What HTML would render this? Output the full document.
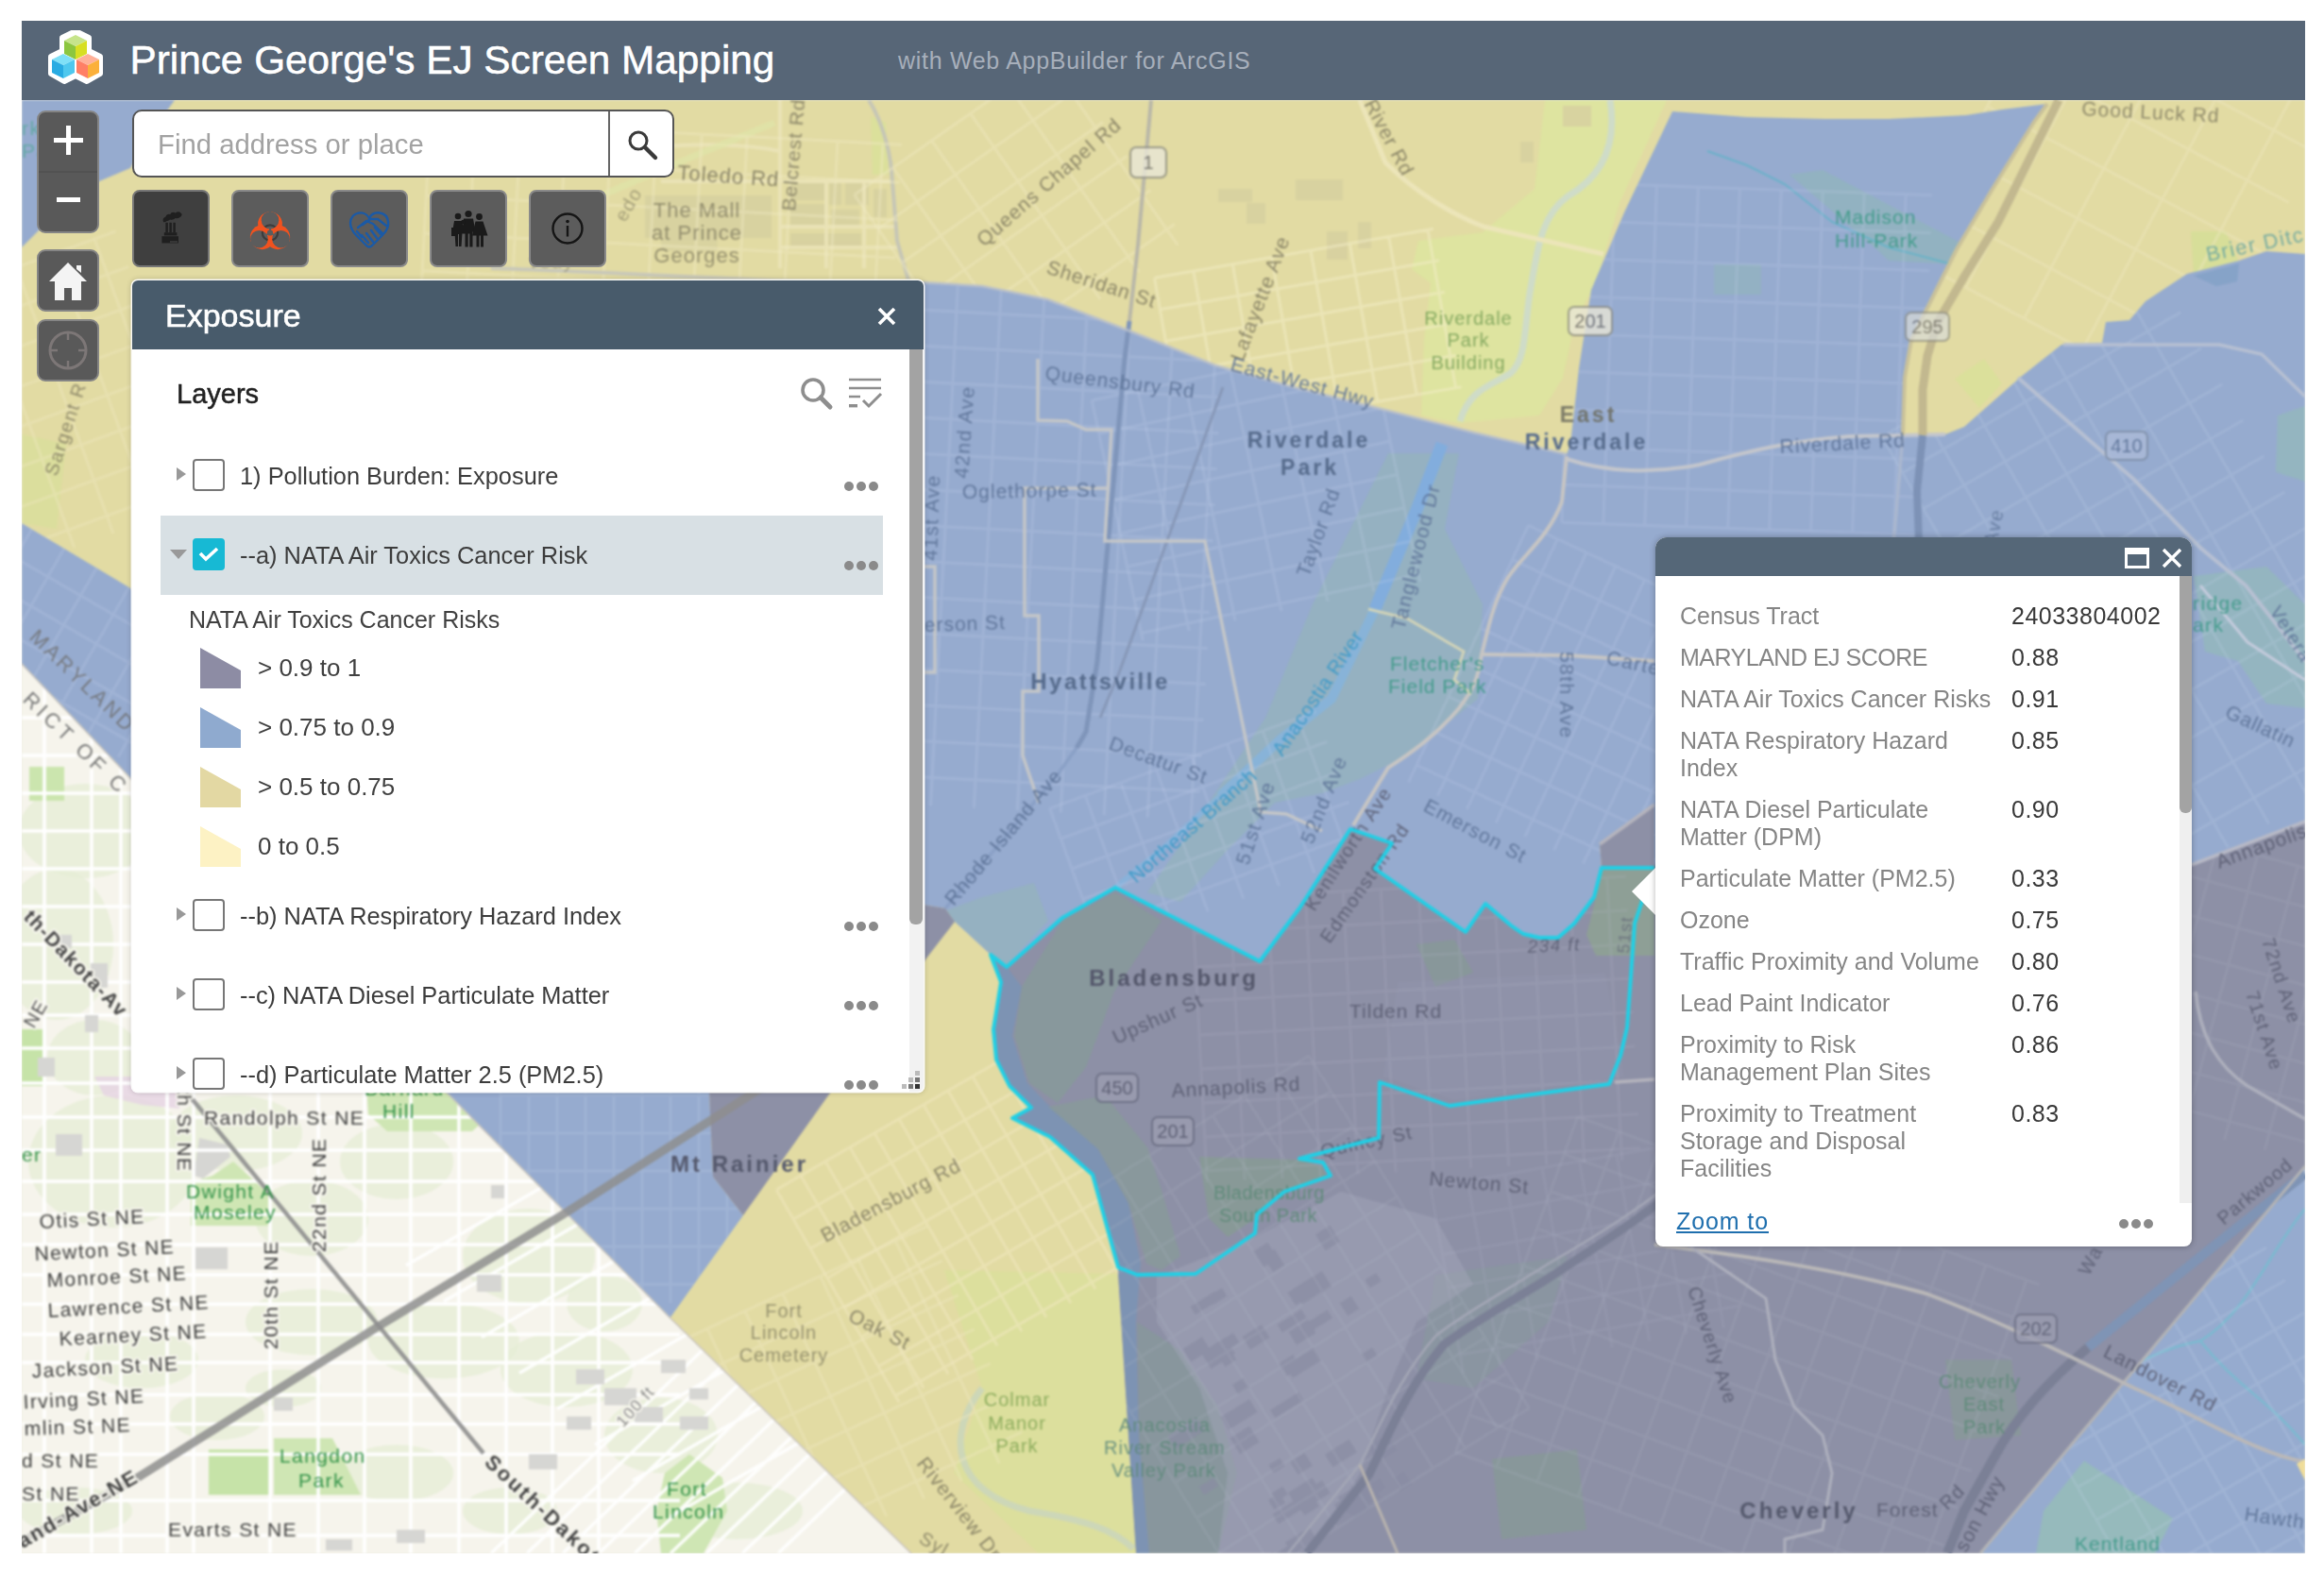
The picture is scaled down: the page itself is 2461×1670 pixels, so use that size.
<!DOCTYPE html>
<html>
<head>
<meta charset="utf-8">
<title>Prince George's EJ Screen Mapping</title>
<style>
html,body{margin:0;padding:0;background:#fff;}
body{width:2461px;height:1670px;position:relative;overflow:hidden;font-family:"Liberation Sans",sans-serif;}
#app{position:absolute;left:23px;top:22px;width:2418px;height:1623px;overflow:hidden;background:#f1f0e6;}
#mapsvg{position:absolute;left:-23px;top:-22px;width:2461px;height:1670px;filter:blur(1px);}
#ui{position:absolute;left:0;top:0;width:2418px;height:1623px;filter:blur(0.6px);}
#header{position:absolute;left:0;top:0;width:2418px;height:84px;background:#576677;}
#title{position:absolute;left:114.5px;top:18px;font-size:42.3px;line-height:48px;color:#fff;white-space:nowrap;-webkit-text-stroke:0.5px #fff;}
#subtitle{position:absolute;left:928px;top:27px;font-size:25px;line-height:30px;color:#a7afbb;white-space:nowrap;letter-spacing:0.7px;}
.mbtn{position:absolute;background:#595959;border:2px solid #858585;border-radius:9px;box-sizing:border-box;}
.wbtn{position:absolute;width:82px;height:82px;background:#5c5c5c;border:2px solid #8a8a8a;border-radius:8px;box-sizing:border-box;top:179px;}
#search{position:absolute;left:117px;top:94px;width:574px;height:72px;background:#fff;border:2px solid #555;border-radius:10px;box-sizing:border-box;}
#search .ph{position:absolute;left:25px;top:17px;font-size:29.3px;line-height:36px;color:#a2a2a2;white-space:nowrap;}
#search .sep{position:absolute;left:502px;top:0;width:2px;height:68px;background:#666;}
#panel{position:absolute;left:117px;top:275px;width:838px;height:859px;background:#fff;border-radius:6px;overflow:hidden;box-shadow:0 0 0 1.5px rgba(255,255,255,0.9),0 0 6px rgba(0,0,0,0.3);}
#panel .hd{position:absolute;left:0;top:0;width:838px;height:73px;background:#485b6b;}
#panel .hd .t{position:absolute;left:35px;top:17px;font-size:34px;line-height:40px;color:#fff;-webkit-text-stroke:0.6px #fff;}
#panel .layers{position:absolute;left:47px;top:103px;font-size:29px;line-height:34px;color:#222;-webkit-text-stroke:0.5px #222;}
.row{position:absolute;left:0;width:838px;height:84px;}
.row .txt{position:absolute;left:114px;top:27px;font-size:25.4px;line-height:30px;color:#3c3c3c;white-space:nowrap;}
.row .cb{position:absolute;left:64px;top:24px;width:34px;height:34px;box-sizing:border-box;border:2px solid #777;border-radius:4px;background:#fff;}
.row .arr{position:absolute;left:47px;top:33px;width:0;height:0;border-left:10px solid #999;border-top:7px solid transparent;border-bottom:7px solid transparent;}
.dots{position:absolute;width:36px;height:10px;}
.dots i{position:absolute;top:0;width:10px;height:10px;border-radius:5px;background:#8a8a8a;}
.dots i:nth-child(1){left:0}.dots i:nth-child(2){left:13px}.dots i:nth-child(3){left:26px}
.leg{position:absolute;left:72px;width:43px;height:43px;}
.legt{position:absolute;left:133px;font-size:26px;line-height:30px;color:#404040;white-space:nowrap;}
#popup{position:absolute;left:1730px;top:547px;width:568px;height:751px;background:#fff;border-radius:12px 12px 8px 8px;overflow:hidden;box-shadow:0 0 6px rgba(0,0,0,0.3);}
#popup .hd{position:absolute;left:0;top:0;width:568px;height:41px;background:#556778;}
.pl{position:absolute;left:26px;font-size:25px;line-height:29px;color:#858585;white-space:nowrap;}
.pv{position:absolute;left:377px;font-size:25px;line-height:29px;color:#383838;white-space:nowrap;letter-spacing:0.5px;}
</style>
</head>
<body>
<div id="app">
<svg id="mapsvg" viewBox="0 0 2461 1670">
<defs>
<clipPath id="cDC"><polygon points="23,702 140,825 473,1156 710,1395 966,1645 23,1645"/></clipPath>
<clipPath id="cMD"><polygon points="23,106 2441,106 2441,1645 966,1645 710,1395 473,1156 140,825 23,702"/></clipPath>
<clipPath id="cYel"><path clip-rule="evenodd" d="M23,106 L2441,106 L2441,1645 L966,1645 L710,1395 L473,1156 L140,825 L23,702Z"/></clipPath>
<clipPath id="cB2"><polygon points="977,299 1040,303 1109,317 1200,352 1287,387 1370,410 1462,433 1560,458 1659,481 1663,470 1672,390 1685,307 1720,225 1771,118 1850,124 1933,126 2000,126 2082,122 2120,116 2168,110 2154,129 2110,200 2072,264 2045,318 2024,360 2017,400 2015,461 2060,460 2080,452 2140,399 2183,365 2226,363 2230,341 2255,339 2272,319 2316,290 2371,276 2400,266 2441,269 2441,870 2320,916 1752,916 1752,852 1694,894 1696,919 1688,950 1667,978 1650,993 1630,993 1613,989 1600,980 1573,957 1552,987 1456,920 1474,893 1430,878 1376,962 1334,1018 1181,940 1125,972 1066,1024 1049,1011 1011,976 1001,962 977,958"/></clipPath>
<clipPath id="cB1"><polygon points="23,554 140,624 300,720 751,1150 751,1156 755,1246 787,1287 710,1395 473,1156 140,825 23,702"/></clipPath>
<clipPath id="cP1"><polygon points="1049,1011 1066,1024 1125,972 1181,940 1334,1018 1376,962 1430,878 1474,893 1456,920 1552,987 1573,957 1600,980 1613,989 1630,993 1650,993 1667,978 1688,950 1696,919 1694,894 1752,852 1752,916 2320,916 2441,870 2441,1235 2097,1645 1203,1645 1184,1349 1184,1342 1157,1244 1112,1204 1072,1184 1092,1173 1069,1150 1055,1122 1052,1090 1060,1040"/></clipPath>
<clipPath id="cB3"><polygon points="2441,1235 2441,1645 2097,1645"/></clipPath>
</defs>
<rect x="23" y="106" width="2418" height="1539" fill="#f6f4ec"/>
<g clip-path="url(#cDC)">
<ellipse cx="90" cy="880" rx="70" ry="50" fill="#e5eed6" opacity="0.75"/>
<ellipse cx="60" cy="1000" rx="60" ry="80" fill="#e5eed6" opacity="0.75"/>
<ellipse cx="120" cy="1230" rx="90" ry="70" fill="#e5eed6" opacity="0.75"/>
<ellipse cx="250" cy="1200" rx="70" ry="40" fill="#e5eed6" opacity="0.75"/>
<ellipse cx="330" cy="1290" rx="60" ry="40" fill="#e5eed6" opacity="0.75"/>
<ellipse cx="420" cy="1230" rx="60" ry="40" fill="#e5eed6" opacity="0.75"/>
<ellipse cx="560" cy="1330" rx="70" ry="50" fill="#e5eed6" opacity="0.75"/>
<ellipse cx="470" cy="1420" rx="80" ry="40" fill="#e5eed6" opacity="0.75"/>
<ellipse cx="600" cy="1450" rx="70" ry="40" fill="#e5eed6" opacity="0.75"/>
<ellipse cx="330" cy="1400" rx="70" ry="35" fill="#e5eed6" opacity="0.75"/>
<ellipse cx="150" cy="1440" rx="60" ry="30" fill="#e5eed6" opacity="0.75"/>
<ellipse cx="230" cy="1500" rx="50" ry="25" fill="#e5eed6" opacity="0.75"/>
<ellipse cx="420" cy="1560" rx="60" ry="30" fill="#e5eed6" opacity="0.75"/>
<ellipse cx="700" cy="1520" rx="60" ry="40" fill="#e5eed6" opacity="0.75"/>
<ellipse cx="780" cy="1600" rx="70" ry="30" fill="#e5eed6" opacity="0.75"/>
<ellipse cx="540" cy="1600" rx="50" ry="25" fill="#e5eed6" opacity="0.75"/>
<ellipse cx="80" cy="1600" rx="60" ry="25" fill="#e5eed6" opacity="0.75"/>
<ellipse cx="640" cy="1380" rx="40" ry="30" fill="#e5eed6" opacity="0.75"/>
<ellipse cx="100" cy="1120" rx="50" ry="40" fill="#e5eed6" opacity="0.75"/>
<ellipse cx="300" cy="1470" rx="40" ry="20" fill="#e5eed6" opacity="0.75"/>
<polygon points="100,1140 190,1140 190,1174 150,1170 110,1160" fill="#e6d3e3" opacity="0.8"/>
<polygon points="202,1252 225,1245 247,1230 284,1264 284,1298 202,1298" fill="#cfe6b4"/><polygon points="211,1205 240,1212 244,1225 215,1248 205,1245" fill="#d6d6d3"/>
<rect x="221" y="1535" width="65" height="48" fill="#c6e3a8"/>
<polygon points="290,1523 352,1523 382,1583 290,1583" fill="#cfe6b4"/>
<polygon points="388,1150 520,1150 520,1180 500,1198 410,1198 390,1180" fill="#cfe6b4"/>
<polygon points="704,1560 730,1540 765,1565 770,1600 745,1645 700,1645 695,1600" fill="#cfe6b4"/>
<polygon points="23,1090 45,1090 45,1150 23,1150" fill="#c6e3a8"/>
<rect x="31" y="812" width="37" height="36" fill="#cbe5ae"/>
<polygon points="630,1300 660,1290 700,1340 680,1360" fill="#d6e9bf"/>
<path d="M47 700V1645 M97 700V1645 M128 700V1645 M177 700V1645 M205 700V1645 M286 700V1645 M337 700V1645 M386 700V1645 M435 700V1645 M486 700V1645 M536 700V1645 M585 700V1645 M634 700V1645 M23 1183H720 M23 1218H720 M23 1251H720 M23 1286H720 M23 1318H720 M23 1350H720 M23 1381H720 M23 1413H720 M23 1443H720 M23 1477H720 M23 1508H720 M23 1540H720 M23 1589H720 M23 1626H720 M23 760H300 M23 800H300 M23 840H300 M23 880H300 M23 920H300 M23 960H300 M23 1000H300 M23 1040H300 M23 1075H300 M23 1110H300 M23 1147H300" stroke="#ffffff" stroke-width="3.5" fill="none"/>
<path d="M520 1645L780 1395 M558 1645L818 1395 M596 1645L856 1395 M634 1645L894 1395 M672 1645L932 1395 M710 1645L970 1395 M748 1645L1008 1395 M786 1645L1046 1395 M824 1645L1084 1395 M430 1340L630 1225 M470 1378L670 1263 M510 1416L710 1301 M550 1454L750 1339 M590 1492L790 1377 M630 1530L830 1415 M670 1568L870 1453 M710 1606L910 1491" stroke="#ffffff" stroke-width="3.5" fill="none" opacity="0.9"/>
<rect x="59" y="1201" width="28" height="23" fill="#d6d6d3"/>
<rect x="207" y="1321" width="34" height="23" fill="#d6d6d3"/>
<rect x="520" y="1255" width="14" height="14" fill="#d6d6d3"/>
<rect x="505" y="1350" width="26" height="18" fill="#d6d6d3"/>
<rect x="610" y="1450" width="30" height="16" fill="#d6d6d3"/>
<rect x="640" y="1470" width="34" height="18" fill="#d6d6d3"/>
<rect x="672" y="1490" width="30" height="16" fill="#d6d6d3"/>
<rect x="600" y="1500" width="26" height="14" fill="#d6d6d3"/>
<rect x="560" y="1540" width="30" height="16" fill="#d6d6d3"/>
<rect x="720" y="1500" width="30" height="14" fill="#d6d6d3"/>
<rect x="290" y="1480" width="20" height="14" fill="#d6d6d3"/>
<rect x="420" y="1620" width="30" height="14" fill="#d6d6d3"/>
<rect x="345" y="1630" width="28" height="12" fill="#d6d6d3"/>
<rect x="40" y="1120" width="18" height="20" fill="#d6d6d3"/>
<rect x="60" y="990" width="16" height="14" fill="#d6d6d3"/>
<rect x="96" y="1020" width="18" height="26" fill="#d6d6d3"/>
<rect x="90" y="1075" width="14" height="18" fill="#d6d6d3"/>
<rect x="700" y="1440" width="26" height="14" fill="#d6d6d3"/>
<rect x="730" y="1470" width="20" height="12" fill="#d6d6d3"/>
</g>
<path d="M23 702L140 825L473 1156L710 1395L966 1645" stroke="#c9c4bf" stroke-width="3" fill="none"/>
<polygon fill="#e2dba3" points="23,106 2441,106 2441,1645 966,1645 710,1395 473,1156 140,825 23,702"/>
<g clip-path="url(#cMD)">
<path d="M1636 106 L1765 106 L1715 215 L1690 300 L1668 340 L1655 400 L1630 440 L1545 448 L1505 440 L1508 360 L1515 300 L1495 285 L1502 255 L1570 246 L1625 200 Z" fill="#dde5a0" opacity="0.85"/>
<path d="M1705 106 C1712 150 1700 185 1660 208 C1630 230 1628 268 1620 310 C1614 350 1616 380 1600 395 C1580 408 1556 412 1546 446" stroke="#cfdcc8" stroke-width="7" fill="none"/>
<path d="M1000 1345 L1183 1349 L1203 1645 L1100 1645 L1010 1560 L1040 1470 Z" fill="#dcdf9c" opacity="0.9"/>
<path d="M1040 1470 C1000 1520 1010 1580 1090 1600 C1150 1610 1180 1620 1200 1640" stroke="#cdd7b8" stroke-width="7" fill="none"/>
<path d="M23 460 L70 470 L60 560 L23 554Z" fill="#d9e09a" opacity="0.7"/>
<path d="M2320 245 L2357 245 L2371 278 L2323 292Z" fill="#d6de98" opacity="0.9"/>
<path d="M2070 401 L2101 380 L2120 406 L2096 432Z" fill="#d9e09a" opacity="0.85"/>
<g fill="#d8d1a0" opacity="0.9">
<rect x="683" y="207" width="134" height="45"/>
<rect x="700" y="252" width="60" height="14"/>
<rect x="837" y="194" width="36" height="18"/>
<rect x="878" y="194" width="13" height="23"/>
<rect x="895" y="194" width="25" height="23"/>
<rect x="837" y="216" width="38" height="26"/>
<rect x="837" y="247" width="38" height="17"/>
<rect x="877" y="247" width="35" height="17"/>
<rect x="880" y="222" width="30" height="20"/>
<rect x="925" y="200" width="14" height="30"/>
<rect x="560" y="150" width="40" height="20"/>
<rect x="610" y="140" width="30" height="26"/>
<rect x="940" y="330" width="20" height="14"/>
<rect x="1290" y="200" width="36" height="14"/>
<rect x="1320" y="215" width="20" height="22"/>
<rect x="1405" y="245" width="22" height="30"/>
<rect x="1438" y="235" width="14" height="28"/>
<rect x="1372" y="190" width="50" height="22"/>
<rect x="1655" y="112" width="30" height="22"/>
<rect x="1610" y="150" width="14" height="22"/>
</g>
<g fill="none" stroke="#ebe4b8" stroke-width="4" opacity="0.9">
<path d="M826 106 V284"/>
<path d="M700 192 H944"/>
<path d="M826 240 H950 M826 262 H952 M875 192 V284 M915 192 V284"/>
<path d="M660 160 C720 150 790 152 826 160"/>
</g>
<path d="M922 123 L938 130 L941 185 L924 185Z" fill="#d9e09a" opacity="0.85"/>
<path d="M920 106 C935 130 942 160 944 180 L950 255 L962 297" stroke="#c6c6b6" stroke-width="4" fill="none"/>
<path d="M560 240 L700 180 L820 130" stroke="#dfe6a8" stroke-width="7" fill="none" opacity="0.7"/>
<path d="M1440 106 L1467 172 C1500 205 1540 228 1571 240 L1698 269" stroke="#ece5b9" stroke-width="5" fill="none"/>
</g>
<g clip-path="url(#cMD)"><path transform="translate(1385 352) rotate(-10)" d="M-150 -85V85 M-108 -85V85 M-66 -85V85 M-24 -85V85 M18 -85V85 M60 -85V85 M102 -85V85 M144 -85V85 M-150 -85H150 M-150 -51H150 M-150 -17H150 M-150 17H150 M-150 51H150 M-150 85H150" stroke="#f3ecc6" stroke-width="3" fill="none" opacity="0.55"/></g>
<g clip-path="url(#cMD)"><path transform="translate(700 240) rotate(3)" d="M-250 -100V100 M-202 -100V100 M-154 -100V100 M-106 -100V100 M-58 -100V100 M-10 -100V100 M38 -100V100 M86 -100V100 M134 -100V100 M182 -100V100 M230 -100V100 M-250 -100H250 M-250 -60H250 M-250 -20H250 M-250 20H250 M-250 60H250 M-250 100H250" stroke="#efe8c0" stroke-width="3" fill="none" opacity="0.45"/></g>
<g clip-path="url(#cMD)"><path transform="translate(1080 230) rotate(-35)" d="M-130 -120V120 M-80 -120V120 M-30 -120V120 M20 -120V120 M70 -120V120 M120 -120V120 M-130 -120H130 M-130 -76H130 M-130 -32H130 M-130 12H130 M-130 56H130 M-130 100H130" stroke="#efe8c0" stroke-width="3" fill="none" opacity="0.45"/></g>
<g clip-path="url(#cMD)"><path transform="translate(2250 190) rotate(-62)" d="M-180 -165V165 M-120 -165V165 M-60 -165V165 M0 -165V165 M60 -165V165 M120 -165V165 M180 -165V165 M-180 -165H180 M-180 -95H180 M-180 -25H180 M-180 45H180 M-180 115H180" stroke="#efe8c0" stroke-width="3" fill="none" opacity="0.42"/></g>
<g clip-path="url(#cMD)"><path transform="translate(80 420) rotate(-20)" d="M-100 -150V150 M-56 -150V150 M-12 -150V150 M32 -150V150 M76 -150V150 M-100 -150H100 M-100 -110H100 M-100 -70H100 M-100 -30H100 M-100 10H100 M-100 50H100 M-100 90H100 M-100 130H100" stroke="#efe8c0" stroke-width="3" fill="none" opacity="0.4"/></g>
<g clip-path="url(#cMD)"><path transform="translate(1030 1290) rotate(-30)" d="M-165 -130V130 M-135 -130V130 M-105 -130V130 M-75 -130V130 M-45 -130V130 M-15 -130V130 M15 -130V130 M45 -130V130 M75 -130V130 M105 -130V130 M135 -130V130 M165 -130V130 M-165 -130H165 M-165 -94H165 M-165 -58H165 M-165 -22H165 M-165 14H165 M-165 50H165 M-165 86H165 M-165 122H165" stroke="#f0e8c0" stroke-width="3" fill="none" opacity="0.55"/></g>
<g clip-path="url(#cMD)"><path transform="translate(900 1480) rotate(-25)" d="M-150 -130V130 M-106 -130V130 M-62 -130V130 M-18 -130V130 M26 -130V130 M70 -130V130 M114 -130V130 M-150 -130H150 M-150 -90H150 M-150 -50H150 M-150 -10H150 M-150 30H150 M-150 70H150 M-150 110H150" stroke="#efe8c0" stroke-width="3" fill="none" opacity="0.4"/></g>
<polygon fill="#96abcf" points="23,106 185,106 160,140 138,178 105,192 60,225 23,262"/>
<polygon fill="#96abcf" points="23,554 140,624 300,720 751,1150 751,1156 755,1246 787,1287 710,1395 473,1156 140,825 23,702"/>
<polygon fill="#96abcf" points="977,299 1040,303 1109,317 1200,352 1287,387 1370,410 1462,433 1560,458 1659,481 1663,470 1672,390 1685,307 1720,225 1771,118 1850,124 1933,126 2000,126 2082,122 2120,116 2168,110 2154,129 2110,200 2072,264 2045,318 2024,360 2017,400 2015,461 2060,460 2080,452 2140,399 2183,365 2226,363 2230,341 2255,339 2272,319 2316,290 2371,276 2400,266 2441,269 2441,870 2320,916 1752,916 1752,852 1694,894 1696,919 1688,950 1667,978 1650,993 1630,993 1613,989 1600,980 1573,957 1552,987 1456,920 1474,893 1430,878 1376,962 1334,1018 1181,940 1125,972 1066,1024 1049,1011 1011,976 1001,962 977,958"/>
<polygon fill="#96abcf" points="2441,1235 2441,1645 2097,1645"/>
<polygon fill="#8d90a6" points="1049,1011 1066,1024 1125,972 1181,940 1334,1018 1376,962 1430,878 1474,893 1456,920 1552,987 1573,957 1600,980 1613,989 1630,993 1650,993 1667,978 1688,950 1696,919 1694,894 1752,852 1752,916 2320,916 2441,870 2441,1235 2097,1645 1203,1645 1184,1349 1184,1342 1157,1244 1112,1204 1072,1184 1092,1173 1069,1150 1055,1122 1052,1090 1060,1040"/>
<polygon fill="#8d90a6" points="751,1156 880,1156 787,1287 755,1246"/>
<polygon fill="#8d90a6" points="977,958 1001,962 1011,976 977,1020"/>
<g clip-path="url(#cB2)">
<path d="M1470 480 L1545 480 L1530 560 L1570 640 L1565 740 L1490 800 L1440 825 L1400 840 L1350 850 L1300 900 L1250 955 L1215 945 L1260 880 L1300 820 L1340 760 L1390 640 Z" fill="#93b8b4" opacity="0.5"/>
<path d="M1000 965 L1040 950 L1095 935 L1110 975 L1066 1022 L1049 1010 L1012 976 Z" fill="#93b8b4" opacity="0.5"/>
<path d="M1527 470 L1500 540 L1456 645" stroke="#82addd" stroke-width="13" fill="none"/>
<path d="M1456 645 L1410 740 L1356 783 L1292 843" stroke="#86b4dc" stroke-width="10" fill="none" opacity="0.85" stroke-linejoin="round"/>
<path d="M1292 843 L1230 900 L1181 940" stroke="#86b4dc" stroke-width="6" fill="none" opacity="0.8"/>
<path d="M1895 185 L1930 180 L2078 258 L2070 280 L2000 276 L1985 262 Z" fill="#8fb8b8" opacity="0.6"/>
<path d="M1808 160 L1850 175 L1890 195 L1940 235 L2000 262 L2075 282" stroke="#5fb3c8" stroke-width="2" fill="none" opacity="0.8"/>
<rect x="1815" y="280" width="50" height="32" fill="#8fb8b8" opacity="0.5"/>
<path d="M2323 610 L2400 600 L2441 640 L2441 750 L2400 745 L2370 700 L2335 690 Z" fill="#93bcb6" opacity="0.6"/>
<path d="M2412 440 L2441 430 L2441 510 L2410 500Z" fill="#93bcb6" opacity="0.6"/>
<path d="M2323 292 L2371 279 L2369 298 L2347 303Z" fill="#7f9fc4" opacity="0.7"/>
</g>
<g clip-path="url(#cB3)"><path d="M2207 1547 L2301 1608 L2282 1645 L2156 1645 L2164 1600Z" fill="#95c0b4" opacity="0.7"/>
<path d="M2441 1280 C2400 1330 2380 1390 2330 1420 C2280 1430 2240 1450 2200 1500 M2330 1420 C2370 1470 2400 1480 2441 1530" stroke="#6fc0d0" stroke-width="2.5" fill="none" opacity="0.7"/></g>
<g clip-path="url(#cP1)">
<path d="M1049 1011 L1066 1024 L1082 1045 L1072 1097 L1088 1147 L1110 1170 L1163 1217 L1195 1274 L1208 1338 L1203 1400 L1206 1520 L1217 1645 L1203 1645 L1184 1349 L1184 1342 L1157 1244 L1112 1204 L1072 1184 L1092 1173 L1069 1150 L1055 1122 L1052 1090 L1060 1040 Z" fill="#7d93b3"/>
<path d="M1082 1045 L1125 975 L1181 945 L1230 975 L1180 1050 L1150 1130 L1120 1168 L1090 1147 L1074 1097 Z" fill="#879b98" opacity="0.75"/>
<path d="M1110 1172 L1170 1160 L1215 1215 L1230 1260 L1250 1330 L1230 1345 L1214 1338 L1195 1274 L1163 1217 Z" fill="#879b98" opacity="0.7"/>
<path d="M1270 1225 L1375 1228 L1400 1235 L1405 1248 L1360 1262 L1330 1290 L1300 1310 L1280 1290 Z" fill="#869c92" opacity="0.7"/>
<path d="M1204 1400 L1250 1430 L1290 1490 L1310 1560 L1290 1645 L1217 1645 L1206 1520 Z" fill="#86999a" opacity="0.7"/>
<path d="M1520 1350 L1660 1330 L1640 1400 L1560 1470 L1500 1460 Z" fill="#879a9c" opacity="0.5"/>
<path d="M1580 1545 L1670 1535 L1680 1620 L1590 1630 Z" fill="#869c92" opacity="0.6"/>
<path d="M1696 921 L1752 921 L1752 1012 L1690 1012 L1680 990 L1690 950Z" fill="#8fa292" opacity="0.8"/>
<path d="M1500 1000 L1540 995 L1560 1030 L1520 1045Z" fill="#869c92" opacity="0.6"/>
<path d="M2060 1440 L2130 1440 L2140 1520 L2070 1525Z" fill="#869c92" opacity="0.55"/>
</g>
<g clip-path="url(#cP1)">
<path d="M1225 1352 L1330 1310 L1420 1262 L1520 1290 L1560 1360 L1500 1400 L1470 1470 L1440 1560 L1390 1645 L1290 1645 L1300 1560 L1270 1470 L1225 1400 Z" fill="#a3a6bb" opacity="0.45"/>
<path d="M1480 1040 L1700 1030 L1720 1140 L1540 1165 L1465 1140 Z" fill="#9699ae" opacity="0.35"/>
<g fill="#8a8da3" opacity="0.75">
<rect x="-12" y="-10" width="24" height="20" transform="translate(1318 1525) rotate(-32)"/><rect x="-7" y="-10" width="14" height="20" transform="translate(1349 1335) rotate(-32)"/><rect x="-15" y="-10" width="30" height="20" transform="translate(1290 1433) rotate(-32)"/><rect x="-9" y="-6" width="18" height="12" transform="translate(1386 1595) rotate(-32)"/><rect x="-7" y="-5" width="14" height="10" transform="translate(1450 1435) rotate(-32)"/><rect x="-7" y="-8" width="14" height="16" transform="translate(1346 1654) rotate(-32)"/><rect x="-12" y="-10" width="24" height="20" transform="translate(1464 1534) rotate(-32)"/><rect x="-15" y="-10" width="30" height="20" transform="translate(1435 1586) rotate(-32)"/><rect x="-15" y="-6" width="30" height="12" transform="translate(1380 1578) rotate(-32)"/><rect x="-9" y="-10" width="18" height="20" transform="translate(1406 1311) rotate(-32)"/><rect x="-15" y="-8" width="30" height="16" transform="translate(1360 1649) rotate(-32)"/><rect x="-18" y="-8" width="36" height="16" transform="translate(1389 1584) rotate(-32)"/><rect x="-9" y="-8" width="18" height="16" transform="translate(1366 1446) rotate(-32)"/><rect x="-12" y="-6" width="24" height="12" transform="translate(1454 1577) rotate(-32)"/><rect x="-18" y="-5" width="36" height="10" transform="translate(1393 1401) rotate(-32)"/><rect x="-18" y="-8" width="36" height="16" transform="translate(1383 1366) rotate(-32)"/><rect x="-15" y="-5" width="30" height="10" transform="translate(1276 1380) rotate(-32)"/><rect x="-9" y="-5" width="18" height="10" transform="translate(1289 1373) rotate(-32)"/><rect x="-7" y="-5" width="14" height="10" transform="translate(1355 1582) rotate(-32)"/><rect x="-15" y="-8" width="30" height="16" transform="translate(1420 1539) rotate(-32)"/><rect x="-12" y="-6" width="24" height="12" transform="translate(1426 1592) rotate(-32)"/><rect x="-7" y="-5" width="14" height="10" transform="translate(1454 1356) rotate(-32)"/><rect x="-9" y="-10" width="18" height="20" transform="translate(1340 1329) rotate(-32)"/><rect x="-7" y="-8" width="14" height="16" transform="translate(1299 1437) rotate(-32)"/><rect x="-15" y="-10" width="30" height="20" transform="translate(1379 1634) rotate(-32)"/><rect x="-18" y="-5" width="36" height="10" transform="translate(1363 1488) rotate(-32)"/><rect x="-18" y="-8" width="36" height="16" transform="translate(1442 1588) rotate(-32)"/><rect x="-9" y="-8" width="18" height="16" transform="translate(1378 1550) rotate(-32)"/><rect x="-12" y="-8" width="24" height="16" transform="translate(1330 1416) rotate(-32)"/><rect x="-18" y="-8" width="36" height="16" transform="translate(1256 1518) rotate(-32)"/><rect x="-9" y="-5" width="18" height="10" transform="translate(1280 1574) rotate(-32)"/><rect x="-12" y="-8" width="24" height="16" transform="translate(1379 1411) rotate(-32)"/><rect x="-15" y="-5" width="30" height="10" transform="translate(1368 1399) rotate(-32)"/><rect x="-7" y="-8" width="14" height="16" transform="translate(1437 1597) rotate(-32)"/><rect x="-18" y="-8" width="36" height="16" transform="translate(1312 1498) rotate(-32)"/><rect x="-12" y="-8" width="24" height="16" transform="translate(1267 1429) rotate(-32)"/><rect x="-7" y="-6" width="14" height="12" transform="translate(1314 1468) rotate(-32)"/><rect x="-12" y="-6" width="24" height="12" transform="translate(1299 1423) rotate(-32)"/><rect x="-7" y="-5" width="14" height="10" transform="translate(1352 1552) rotate(-32)"/><rect x="-9" y="-10" width="18" height="20" transform="translate(1439 1594) rotate(-32)"/><rect x="-7" y="-8" width="14" height="16" transform="translate(1485 1569) rotate(-32)"/><rect x="-18" y="-10" width="36" height="20" transform="translate(1390 1364) rotate(-32)"/><rect x="-7" y="-6" width="14" height="12" transform="translate(1352 1590) rotate(-32)"/><rect x="-18" y="-6" width="36" height="12" transform="translate(1366 1599) rotate(-32)"/><rect x="-7" y="-8" width="14" height="16" transform="translate(1429 1383) rotate(-32)"/><rect x="-18" y="-8" width="36" height="16" transform="translate(1380 1443) rotate(-32)"/>
</g></g>
<g clip-path="url(#cB2)"><path transform="translate(1120 560) rotate(3)" d="M-165 -300V300 M-119 -300V300 M-73 -300V300 M-27 -300V300 M19 -300V300 M65 -300V300 M111 -300V300 M157 -300V300 M-165 -300H165 M-165 -262H165 M-165 -224H165 M-165 -186H165 M-165 -148H165 M-165 -110H165 M-165 -72H165 M-165 -34H165 M-165 4H165 M-165 42H165 M-165 80H165 M-165 118H165 M-165 156H165 M-165 194H165 M-165 232H165 M-165 270H165" stroke="#c9d6ee" stroke-width="3" fill="none" opacity="0.2"/></g>
<g clip-path="url(#cB2)"><path transform="translate(1330 520) rotate(-12)" d="M-150 -130V130 M-100 -130V130 M-50 -130V130 M0 -130V130 M50 -130V130 M100 -130V130 M150 -130V130 M-150 -130H150 M-150 -94H150 M-150 -58H150 M-150 -22H150 M-150 14H150 M-150 50H150 M-150 86H150 M-150 122H150" stroke="#c9d6ee" stroke-width="3" fill="none" opacity="0.2"/></g>
<g clip-path="url(#cB2)"><path transform="translate(1850 380) rotate(2)" d="M-190 -180V180 M-146 -180V180 M-102 -180V180 M-58 -180V180 M-14 -180V180 M30 -180V180 M74 -180V180 M118 -180V180 M162 -180V180 M-190 -180H190 M-190 -140H190 M-190 -100H190 M-190 -60H190 M-190 -20H190 M-190 20H190 M-190 60H190 M-190 100H190 M-190 140H190 M-190 180H190" stroke="#c9d6ee" stroke-width="3" fill="none" opacity="0.19"/></g>
<g clip-path="url(#cB2)"><path transform="translate(1700 760) rotate(25)" d="M-160 -150V150 M-126 -150V150 M-92 -150V150 M-58 -150V150 M-24 -150V150 M10 -150V150 M44 -150V150 M78 -150V150 M112 -150V150 M146 -150V150 M-160 -150H160 M-160 -110H160 M-160 -70H160 M-160 -30H160 M-160 10H160 M-160 50H160 M-160 90H160 M-160 130H160" stroke="#c9d6ee" stroke-width="3" fill="none" opacity="0.19"/></g>
<g clip-path="url(#cB2)"><path transform="translate(1280 880) rotate(-20)" d="M-150 -80V80 M-110 -80V80 M-70 -80V80 M-30 -80V80 M10 -80V80 M50 -80V80 M90 -80V80 M130 -80V80 M-150 -80H150 M-150 -46H150 M-150 -12H150 M-150 22H150 M-150 56H150" stroke="#c9d6ee" stroke-width="3" fill="none" opacity="0.19"/></g>
<g clip-path="url(#cB2)"><path transform="translate(2280 620) rotate(-30)" d="M-170 -280V280 M-120 -280V280 M-70 -280V280 M-20 -280V280 M30 -280V280 M80 -280V280 M130 -280V280 M-170 -280H170 M-170 -236H170 M-170 -192H170 M-170 -148H170 M-170 -104H170 M-170 -60H170 M-170 -16H170 M-170 28H170 M-170 72H170 M-170 116H170 M-170 160H170 M-170 204H170 M-170 248H170" stroke="#c9d6ee" stroke-width="3" fill="none" opacity="0.18"/></g>
<g clip-path="url(#cB1)"><path transform="translate(80 660) rotate(30)" d="M-130 -100V100 M-90 -100V100 M-50 -100V100 M-10 -100V100 M30 -100V100 M70 -100V100 M110 -100V100 M-130 -100H130 M-130 -64H130 M-130 -28H130 M-130 8H130 M-130 44H130 M-130 80H130" stroke="#c9d6ee" stroke-width="3" fill="none" opacity="0.2"/></g>
<g clip-path="url(#cB1)"><path transform="translate(660 1250) rotate(0)" d="M-130 -130V130 M-100 -130V130 M-70 -130V130 M-40 -130V130 M-10 -130V130 M20 -130V130 M50 -130V130 M80 -130V130 M110 -130V130 M-130 -130H130 M-130 -90H130 M-130 -50H130 M-130 -10H130 M-130 30H130 M-130 70H130 M-130 110H130" stroke="#c9d6ee" stroke-width="3" fill="none" opacity="0.18"/></g>
<g clip-path="url(#cB3)"><path transform="translate(2330 1500) rotate(-30)" d="M-150 -200V200 M-106 -200V200 M-62 -200V200 M-18 -200V200 M26 -200V200 M70 -200V200 M114 -200V200 M-150 -200H150 M-150 -160H150 M-150 -120H150 M-150 -80H150 M-150 -40H150 M-150 0H150 M-150 40H150 M-150 80H150 M-150 120H150 M-150 160H150 M-150 200H150" stroke="#c9d6ee" stroke-width="3" fill="none" opacity="0.18"/></g>
<g clip-path="url(#cP1)"><path transform="translate(1500 1090) rotate(-3)" d="M-230 -150V150 M-190 -150V150 M-150 -150V150 M-110 -150V150 M-70 -150V150 M-30 -150V150 M10 -150V150 M50 -150V150 M90 -150V150 M130 -150V150 M170 -150V150 M210 -150V150 M-230 -150H230 M-230 -114H230 M-230 -78H230 M-230 -42H230 M-230 -6H230 M-230 30H230 M-230 66H230 M-230 102H230 M-230 138H230" stroke="#b9bccd" stroke-width="3" fill="none" opacity="0.15"/></g>
<g clip-path="url(#cP1)"><path transform="translate(1350 1400) rotate(-32)" d="M-180 -220V220 M-140 -220V220 M-100 -220V220 M-60 -220V220 M-20 -220V220 M20 -220V220 M60 -220V220 M100 -220V220 M140 -220V220 M180 -220V220 M-180 -220H180 M-180 -176H180 M-180 -132H180 M-180 -88H180 M-180 -44H180 M-180 0H180 M-180 44H180 M-180 88H180 M-180 132H180 M-180 176H180 M-180 220H180" stroke="#b9bccd" stroke-width="3" fill="none" opacity="0.14"/></g>
<g clip-path="url(#cP1)"><path transform="translate(1850 1450) rotate(20)" d="M-260 -190V190 M-214 -190V190 M-168 -190V190 M-122 -190V190 M-76 -190V190 M-30 -190V190 M16 -190V190 M62 -190V190 M108 -190V190 M154 -190V190 M200 -190V190 M246 -190V190 M-260 -190H260 M-260 -148H260 M-260 -106H260 M-260 -64H260 M-260 -22H260 M-260 20H260 M-260 62H260 M-260 104H260 M-260 146H260 M-260 188H260" stroke="#b9bccd" stroke-width="3" fill="none" opacity="0.14"/></g>
<g clip-path="url(#cP1)"><path transform="translate(2350 1050) rotate(15)" d="M-130 -150V150 M-86 -150V150 M-42 -150V150 M2 -150V150 M46 -150V150 M90 -150V150 M-130 -150H130 M-130 -110H130 M-130 -70H130 M-130 -30H130 M-130 10H130 M-130 50H130 M-130 90H130 M-130 130H130" stroke="#b9bccd" stroke-width="3" fill="none" opacity="0.14"/></g>
<g clip-path="url(#cP1)"><path transform="translate(1680 1330) rotate(-10)" d="M-150 -100V100 M-110 -100V100 M-70 -100V100 M-30 -100V100 M10 -100V100 M50 -100V100 M90 -100V100 M130 -100V100 M-150 -100H150 M-150 -64H150 M-150 -28H150 M-150 8H150 M-150 44H150 M-150 80H150" stroke="#b9bccd" stroke-width="3" fill="none" opacity="0.13"/></g>
<g fill="none">
<path d="M1219 106 L1205 260 L1196 340" stroke="#b9b7a8" stroke-width="4"/>
<path d="M1196 340 L1191 380 L1171 600 L1162 700 L1150 775 L1140 792" stroke="#7f95ba" stroke-width="5"/>
<path d="M1140 792 L1120 820 L1001 962" stroke="#8aa0c6" stroke-width="3.5"/>
<path d="M1295 410 L1186 710 L1165 760" stroke="#8798b8" stroke-width="3"/>
<path d="M977 299 L1040 303 L1109 317 L1200 352 L1287 387 L1370 410 L1462 433 L1560 458 L1659 481" stroke="#b9bfca" stroke-width="3" opacity="0.8"/>
<path d="M1659 483 L1654 531 C1640 570 1610 590 1596 613 C1580 640 1575 670 1569 693 C1565 720 1560 730 1545 750 C1520 780 1490 800 1470 813 L1433 874" stroke="#c7c5c3" stroke-width="4"/>
<path d="M1569 693 L1660 694 L1752 700" stroke="#c7c5c3" stroke-width="4"/>
<path d="M1659 486 C1700 500 1750 502 1800 492 C1850 478 1900 466 1960 462 L2015 461 L2060 460" stroke="#c4c6cc" stroke-width="4"/>
<path d="M2137 400 L2260 508 L2330 580 L2378 620 L2441 700" stroke="#b7c0d2" stroke-width="4"/>
<path d="M2185 365 L2350 365 L2395 375 L2441 420" stroke="#b7c0d2" stroke-width="3.5"/>
<path d="M2180 106 L2116 235 L2080 293 L2052 341 L2041 377 L2036 413 L2036 461" stroke="#c2b88f" stroke-width="9"/>
<path d="M2168 110 L2154 129 L2110 200 L2072 264 L2045 318 L2024 360 L2017 400 L2015 461" stroke="#c9c19a" stroke-width="4"/>
<path d="M2036 461 L2030 520 L2032 575" stroke="#7d92b6" stroke-width="8"/>
<path d="M2015 461 L2010 520 L2005 575" stroke="#aab7cf" stroke-width="3.5"/>
<path d="M1099 380 V445 L1130 446 L1150 455 L1177 455 L1170 573 H1276 L1335 860 L1362 862 L1400 880" stroke="#c4c6c8" stroke-width="3.5"/>
<path d="M1172 517 H1085 V652 H1100 V732 H1083 V800 L1100 850" stroke="#c4c6c8" stroke-width="3.5"/>
<path d="M977 600 L990 600 L990 712 L977 712" stroke="#c4c6c8" stroke-width="3.5"/>
<path d="M1449 645 L1490 655 L1550 690 L1540 720 L1558 735" stroke="#d1d3b8" stroke-width="3"/>
<path d="M2320 916 L2441 870" stroke="#b7b9c6" stroke-width="3.5"/>
<path d="M2330 620 L2380 680 L2441 720" stroke="#c4cbdc" stroke-width="3"/>
<path d="M1752 852 L1694 894" stroke="#b5b4bd" stroke-width="3.5"/>
<path d="M1710 1146 L1752 1143" stroke="#b5b4bd" stroke-width="3.5"/>
<path d="M1800 1239 C1740 1290 1690 1320 1647 1349 C1590 1385 1560 1400 1529 1424 C1490 1470 1470 1520 1450 1561 L1384 1645" stroke="#7b8096" stroke-width="9"/>
<path d="M1800 1228 C1740 1279 1690 1309 1640 1338 C1583 1374 1552 1390 1521 1414 C1480 1460 1462 1510 1440 1551 L1364 1645" stroke="#a4a7b6" stroke-width="2.5"/>
<path d="M1440 1551 L1480 1645" stroke="#b8b3ae" stroke-width="3"/>
<path d="M2441 1243 L2325 1335 L2211 1427" stroke="#7f94b5" stroke-width="10"/>
<path d="M2211 1427 C2160 1470 2130 1510 2113 1541 L2080 1600 L2062 1645" stroke="#7b8096" stroke-width="10"/>
<path d="M2441 1235 L2097 1645" stroke="#b3b3b5" stroke-width="3"/>
<path d="M1752 1318 C1850 1330 1950 1345 2040 1370 C2120 1400 2200 1440 2260 1470 C2330 1500 2390 1540 2441 1548" stroke="#bab8b8" stroke-width="4"/>
<path d="M1790 1320 L1870 1375 L1880 1440 L1900 1490 L1930 1520 L1940 1560 L1930 1620 L1890 1630 L1890 1645" stroke="#aeb0bd" stroke-width="3"/>
<path d="M2325 1050 C2330 1100 2350 1130 2380 1150 L2441 1185" stroke="#aeb0bd" stroke-width="3.5"/>
<path d="M520 284 C650 288 800 298 977 303" stroke="#c9c8b8" stroke-width="4"/>
</g>
<polygon points="2441,1545 2432,1550 2441,1568" fill="#f0dd9a"/>
<path d="M23 1633 L142 1567 L400 1405 L598 1285 L800 1156 L830 1137" stroke="#8e8e8e" stroke-width="9" fill="none" opacity="0.85"/>
<path d="M192 1150 L512 1539" stroke="#8e8e8e" stroke-width="4.5" fill="none" opacity="0.9"/>
<g font-family="Liberation Sans, sans-serif">
<text x="216" y="1191" font-size="21" letter-spacing="1.4" fill="#414141" stroke="#f7f6ee" stroke-width="4" paint-order="stroke" stroke-linejoin="round">Randolph St NE</text>
<text x="42" y="1301" transform="rotate(-3 42 1301)" font-size="21" letter-spacing="1.4" fill="#414141" stroke="#f7f6ee" stroke-width="4" paint-order="stroke" stroke-linejoin="round">Otis St NE</text>
<text x="37" y="1335" transform="rotate(-3 37 1335)" font-size="21" letter-spacing="1.4" fill="#414141" stroke="#f7f6ee" stroke-width="4" paint-order="stroke" stroke-linejoin="round">Newton St NE</text>
<text x="50" y="1363" transform="rotate(-3 50 1363)" font-size="21" letter-spacing="1.4" fill="#414141" stroke="#f7f6ee" stroke-width="4" paint-order="stroke" stroke-linejoin="round">Monroe St NE</text>
<text x="51" y="1395" transform="rotate(-3 51 1395)" font-size="21" letter-spacing="1.4" fill="#414141" stroke="#f7f6ee" stroke-width="4" paint-order="stroke" stroke-linejoin="round">Lawrence St NE</text>
<text x="63" y="1425" transform="rotate(-3 63 1425)" font-size="21" letter-spacing="1.4" fill="#414141" stroke="#f7f6ee" stroke-width="4" paint-order="stroke" stroke-linejoin="round">Kearney St NE</text>
<text x="34" y="1459" transform="rotate(-3 34 1459)" font-size="21" letter-spacing="1.4" fill="#414141" stroke="#f7f6ee" stroke-width="4" paint-order="stroke" stroke-linejoin="round">Jackson St NE</text>
<text x="25" y="1492" transform="rotate(-3 25 1492)" font-size="21" letter-spacing="1.4" fill="#414141" stroke="#f7f6ee" stroke-width="4" paint-order="stroke" stroke-linejoin="round">Irving St NE</text>
<text x="26" y="1520" transform="rotate(-2 26 1520)" font-size="21" letter-spacing="1.4" fill="#414141" stroke="#f7f6ee" stroke-width="4" paint-order="stroke" stroke-linejoin="round">mlin St NE</text>
<text x="23" y="1554" font-size="21" letter-spacing="1.4" fill="#414141" stroke="#f7f6ee" stroke-width="4" paint-order="stroke" stroke-linejoin="round">d St NE</text>
<text x="23" y="1589" font-size="21" letter-spacing="1.4" fill="#414141" stroke="#f7f6ee" stroke-width="4" paint-order="stroke" stroke-linejoin="round">St NE</text>
<text x="178" y="1627" font-size="21" letter-spacing="1.4" fill="#414141" stroke="#f7f6ee" stroke-width="4" paint-order="stroke" stroke-linejoin="round">Evarts St NE</text>
<text x="294" y="1429" transform="rotate(-90 294 1429)" font-size="21" letter-spacing="1.4" fill="#414141" stroke="#f7f6ee" stroke-width="4" paint-order="stroke" stroke-linejoin="round">20th St NE</text>
<text x="345" y="1326" transform="rotate(-90 345 1326)" font-size="21" letter-spacing="1.4" fill="#414141" stroke="#f7f6ee" stroke-width="4" paint-order="stroke" stroke-linejoin="round">22nd St NE</text>
<text x="188" y="1152" transform="rotate(90 188 1152)" font-size="21" letter-spacing="1.4" fill="#414141" stroke="#f7f6ee" stroke-width="4" paint-order="stroke" stroke-linejoin="round">th St NE</text>
<text x="386" y="1160" font-size="21" letter-spacing="1.4" fill="#35944a">Barnard</text>
<text x="405" y="1184" font-size="21" letter-spacing="1.4" fill="#35944a">Hill</text>
<text x="197" y="1269" font-size="21" letter-spacing="1.4" fill="#35944a">Dwight A</text>
<text x="205" y="1291" font-size="21" letter-spacing="1.4" fill="#35944a">Moseley</text>
<text x="296" y="1549" font-size="21" letter-spacing="1.4" fill="#35944a">Langdon</text>
<text x="316" y="1575" font-size="21" letter-spacing="1.4" fill="#35944a">Park</text>
<text x="706" y="1584" font-size="21" letter-spacing="1.4" fill="#35944a">Fort</text>
<text x="691" y="1608" font-size="21" letter-spacing="1.4" fill="#35944a">Lincoln</text>
<text x="23" y="1230" font-size="21" letter-spacing="1.4" fill="#35944a">er</text>
<text x="23" y="143" font-size="21" letter-spacing="1.4" fill="#5fa8a0" opacity="0.9">rk</text>
<text x="23" y="167" font-size="21" letter-spacing="1.4" fill="#5fa8a0" opacity="0.9">Pa</text>
<text x="512" y="1550" transform="rotate(43 512 1550)" font-size="22" letter-spacing="2.5" fill="#444" font-weight="bold" stroke="#f7f6ee" stroke-width="4" paint-order="stroke" stroke-linejoin="round">South-Dakota</text>
<text x="24" y="1640" transform="rotate(-30 24 1640)" font-size="22" letter-spacing="2" fill="#444" font-weight="bold" stroke="#f7f6ee" stroke-width="4" paint-order="stroke" stroke-linejoin="round">and-Ave-NE</text>
<text x="660" y="1512" transform="rotate(-48 660 1512)" font-size="17" letter-spacing="1.4" fill="#8a8a8a" stroke="#f7f6ee" stroke-width="4" paint-order="stroke" stroke-linejoin="round">100 ft</text>
<text x="30" y="676" transform="rotate(44 30 676)" font-size="22" letter-spacing="3" fill="#6f6f6f" opacity="0.8">MARYLAND</text>
<text x="23" y="742" transform="rotate(44 23 742)" font-size="22" letter-spacing="4" fill="#777" stroke="#f7f6ee" stroke-width="4" paint-order="stroke" stroke-linejoin="round">RICT OF C</text>
<text x="24" y="972" transform="rotate(46 24 972)" font-size="21" letter-spacing="1.5" fill="#444" font-weight="bold" stroke="#f7f6ee" stroke-width="4" paint-order="stroke" stroke-linejoin="round">th-Dakota-Av</text>
<text x="36" y="1090" transform="rotate(-60 36 1090)" font-size="20" letter-spacing="1.4" fill="#555" stroke="#f7f6ee" stroke-width="4" paint-order="stroke" stroke-linejoin="round">NE</text>
<text x="60" y="505" transform="rotate(-72 60 505)" font-size="20" letter-spacing="1.4" fill="#7d785e" opacity="0.8">Sargent R</text>
<text x="717" y="190" transform="rotate(4 717 190)" font-size="22" letter-spacing="1" fill="#7d785e" opacity="0.85">Toledo Rd</text>
<text x="842" y="224" transform="rotate(-85 842 224)" font-size="21" letter-spacing="1" fill="#7d785e" opacity="0.85">Belcrest Rd</text>
<text x="738" y="230" font-size="22" letter-spacing="1" fill="#7d785e" opacity="0.75" text-anchor="middle">The Mall</text>
<text x="738" y="254" font-size="22" letter-spacing="1" fill="#7d785e" opacity="0.75" text-anchor="middle">at Prince</text>
<text x="738" y="278" font-size="22" letter-spacing="1" fill="#7d785e" opacity="0.75" text-anchor="middle">Georges</text>
<text x="1042" y="262" transform="rotate(-41 1042 262)" font-size="21" letter-spacing="1" fill="#7d785e" opacity="0.85">Queens Chapel Rd</text>
<g opacity="0.8"><rect x="1197.0" y="156.0" width="38" height="32" rx="6" fill="#e9e6d6" stroke="#8a8a80" stroke-width="2"/><text x="1216" y="179" font-size="20" text-anchor="middle" fill="#666">1</text></g>
<text x="1444" y="110" transform="rotate(62 1444 110)" font-size="21" letter-spacing="0.8" fill="#7d785e" opacity="0.85">River Rd</text>
<text x="1107" y="289" transform="rotate(18 1107 289)" font-size="21" letter-spacing="1" fill="#7d785e" opacity="0.85">Sheridan St</text>
<text x="1316" y="384" transform="rotate(-69 1316 384)" font-size="21" letter-spacing="1" fill="#7d785e" opacity="0.85">Lafayette Ave</text>
<text x="1555" y="344" font-size="20" letter-spacing="1" fill="#7da35a" opacity="0.9" text-anchor="middle">Riverdale</text>
<text x="1555" y="367" font-size="20" letter-spacing="1" fill="#7da35a" opacity="0.9" text-anchor="middle">Park</text>
<text x="1555" y="391" font-size="20" letter-spacing="1" fill="#7da35a" opacity="0.9" text-anchor="middle">Building</text>
<g opacity="0.8"><rect x="1661.0" y="325.0" width="46" height="30" rx="6" fill="#e9e6d6" stroke="#8a8a80" stroke-width="2"/><text x="1684" y="347" font-size="20" text-anchor="middle" fill="#666">201</text></g>
<text x="2204" y="122" transform="rotate(3 2204 122)" font-size="21" letter-spacing="1" fill="#7d785e" opacity="0.8">Good Luck Rd</text>
<text x="2338" y="277" transform="rotate(-12 2338 277)" font-size="22" letter-spacing="1.5" fill="#6fa8a0" opacity="0.9">Brier Ditc</text>
<g opacity="0.7"><rect x="2018.0" y="331.0" width="46" height="30" rx="6" fill="#d9dcd8" stroke="#8a8a80" stroke-width="2"/><text x="2041" y="353" font-size="20" text-anchor="middle" fill="#666">295</text></g>
<text x="560" y="284" font-size="20" letter-spacing="1.4" fill="#7d785e" opacity="0.5">vedy</text>
<text x="662" y="236" transform="rotate(-60 662 236)" font-size="20" letter-spacing="1.4" fill="#7d785e" opacity="0.6">edo</text>
<text x="1302" y="392" transform="rotate(15 1302 392)" font-size="21" letter-spacing="1" fill="#5d7397" opacity="0.9">East-West Hwy</text>
<text x="1106" y="402" transform="rotate(7 1106 402)" font-size="21" letter-spacing="1" fill="#5d7397" opacity="0.9">Queensbury Rd</text>
<text x="1386" y="474" font-size="23" letter-spacing="3" fill="#566b8c" font-weight="bold" text-anchor="middle">Riverdale</text>
<text x="1387" y="503" font-size="23" letter-spacing="3" fill="#566b8c" font-weight="bold" text-anchor="middle">Park</text>
<text x="1682" y="447" font-size="23" letter-spacing="3" fill="#6b6b5e" font-weight="bold" opacity="0.85" text-anchor="middle">East</text>
<text x="1680" y="476" font-size="23" letter-spacing="3" fill="#566b8c" font-weight="bold" text-anchor="middle">Riverdale</text>
<text x="1025" y="507" transform="rotate(-86 1025 507)" font-size="21" letter-spacing="1.4" fill="#5d7397" opacity="0.9">42nd Ave</text>
<text x="992" y="594" transform="rotate(-88 992 594)" font-size="21" letter-spacing="1.4" fill="#5d7397" opacity="0.9">41st Ave</text>
<text x="1019" y="528" transform="rotate(-1 1019 528)" font-size="21" letter-spacing="1" fill="#5d7397" opacity="0.9">Oglethorpe St</text>
<text x="1386" y="612" transform="rotate(-70 1386 612)" font-size="21" letter-spacing="1" fill="#5d7397" opacity="0.9">Taylor Rd</text>
<text x="979" y="669" transform="rotate(-2 979 669)" font-size="21" letter-spacing="1" fill="#5d7397" opacity="0.9">erson St</text>
<text x="1165" y="730" font-size="24" letter-spacing="2.5" fill="#566b8c" font-weight="bold" text-anchor="middle">Hyattsville</text>
<text x="1487" y="668" transform="rotate(-76 1487 668)" font-size="21" letter-spacing="1.4" fill="#5d7397" opacity="0.9">Tanglewood Dr</text>
<text x="1472" y="710" font-size="21" letter-spacing="1" fill="#3d9a88" opacity="0.9">Fletcher's</text>
<text x="1470" y="734" font-size="21" letter-spacing="1" fill="#3d9a88" opacity="0.9">Field Park</text>
<text x="1652" y="690" transform="rotate(90 1652 690)" font-size="21" letter-spacing="1.4" fill="#5d7397" opacity="0.9">58th Ave</text>
<text x="1700" y="703" transform="rotate(12 1700 703)" font-size="21" letter-spacing="1.4" fill="#5d7397" opacity="0.9">Carte</text>
<text x="1885" y="480" transform="rotate(-3 1885 480)" font-size="21" letter-spacing="1" fill="#5d7397" opacity="0.9">Riverdale Rd</text>
<text x="1943" y="237" font-size="21" letter-spacing="1" fill="#3d9a88" opacity="0.9">Madison</text>
<text x="1943" y="262" font-size="21" letter-spacing="1" fill="#3d9a88" opacity="0.9">Hill-Park</text>
<g opacity="0.9"><rect x="2230.0" y="457.0" width="44" height="30" rx="6" fill="#a9b9d6" stroke="#7f8fa8" stroke-width="2"/><text x="2252" y="479" font-size="20" text-anchor="middle" fill="#5d7397">410</text></g>
<text x="1173" y="793" transform="rotate(20 1173 793)" font-size="21" letter-spacing="1" fill="#5d7397" opacity="0.9">Decatur St</text>
<text x="1010" y="960" transform="rotate(-50 1010 960)" font-size="21" letter-spacing="1" fill="#5d7397" opacity="0.95">Rhode Island Ave</text>
<text x="1203" y="936" transform="rotate(-41 1203 936)" font-size="21" letter-spacing="0.5" fill="#3d9ac8" opacity="0.95">Northeast Branch</text>
<text x="1358" y="802" transform="rotate(-56 1358 802)" font-size="21" letter-spacing="0.5" fill="#3d9ac8" opacity="0.95">Anacostia River</text>
<text x="1322" y="917" transform="rotate(-72 1322 917)" font-size="21" letter-spacing="1.4" fill="#5d7397" opacity="0.9">51st Ave</text>
<text x="1390" y="895" transform="rotate(-68 1390 895)" font-size="21" letter-spacing="1.4" fill="#5d7397" opacity="0.9">52nd Ave</text>
<text x="1506" y="858" transform="rotate(28 1506 858)" font-size="21" letter-spacing="1" fill="#5d7397" opacity="0.9">Emerson St</text>
<text x="2114" y="578" transform="rotate(-78 2114 578)" font-size="20" letter-spacing="1.4" fill="#5d7397" opacity="0.8">Ave</text>
<text x="2322" y="646" font-size="21" letter-spacing="1.4" fill="#3d9a88" opacity="0.9">ridge</text>
<text x="2322" y="669" font-size="21" letter-spacing="1.4" fill="#3d9a88" opacity="0.9">ark</text>
<text x="2403" y="647" transform="rotate(58 2403 647)" font-size="20" letter-spacing="1.4" fill="#5d7397" opacity="0.9">Vetera</text>
<text x="2355" y="759" transform="rotate(25 2355 759)" font-size="21" letter-spacing="1" fill="#5d7397" opacity="0.9">Gallatin</text>
<text x="2376" y="1610" transform="rotate(8 2376 1610)" font-size="21" letter-spacing="1" fill="#5d7397" opacity="0.9">Hawth</text>
<text x="2197" y="1642" font-size="21" letter-spacing="1" fill="#3d9a88" opacity="0.9">Kentland</text>
<text x="1392" y="966" transform="rotate(-57 1392 966)" font-size="20" letter-spacing="1.4" fill="#5a5d72" opacity="0.9">Kenilworth Ave</text>
<text x="1408" y="1000" transform="rotate(-55 1408 1000)" font-size="20" letter-spacing="1.4" fill="#5a5d72" opacity="0.9">Edmonston Rd</text>
<text x="1243" y="1044" font-size="24" letter-spacing="3" fill="#53566a" font-weight="bold" text-anchor="middle">Bladensburg</text>
<text x="1182" y="1106" transform="rotate(-24 1182 1106)" font-size="21" letter-spacing="1" fill="#5a5d72" opacity="0.9">Upshur St</text>
<text x="1429" y="1078" font-size="21" letter-spacing="1" fill="#5a5d72" opacity="0.9">Tilden Rd</text>
<g opacity="0.9"><rect x="1161.0" y="1137.0" width="44" height="30" rx="6" fill="#9a9cb0" stroke="#6c6f84" stroke-width="2"/><text x="1183" y="1159" font-size="20" text-anchor="middle" fill="#5a5d72">450</text></g>
<g opacity="0.9"><rect x="1220.0" y="1183.0" width="44" height="30" rx="6" fill="#9a9cb0" stroke="#6c6f84" stroke-width="2"/><text x="1242" y="1205" font-size="20" text-anchor="middle" fill="#5a5d72">201</text></g>
<g opacity="0.8"><rect x="2134.0" y="1392.0" width="44" height="30" rx="6" fill="#9a9cb0" stroke="#6c6f84" stroke-width="2"/><text x="2156" y="1414" font-size="20" text-anchor="middle" fill="#5a5d72">202</text></g>
<text x="1241" y="1162" transform="rotate(-3 1241 1162)" font-size="21" letter-spacing="1" fill="#5a5d72" opacity="0.9">Annapolis Rd</text>
<text x="1618" y="1009" transform="rotate(-3 1618 1009)" font-size="19" letter-spacing="1.4" fill="#5a5d72" font-style="italic" opacity="0.85">234 ft</text>
<text x="1400" y="1226" transform="rotate(-12 1400 1226)" font-size="20" letter-spacing="1.4" fill="#5a5d72" opacity="0.9">Quincy St</text>
<text x="1513" y="1255" transform="rotate(5 1513 1255)" font-size="21" letter-spacing="1" fill="#5a5d72" opacity="0.9">Newton St</text>
<text x="1285" y="1270" font-size="20" letter-spacing="0.5" fill="#5d8a78" opacity="0.9">Bladensburg</text>
<text x="1291" y="1294" font-size="20" letter-spacing="0.5" fill="#5d8a78" opacity="0.9">South Park</text>
<text x="1185" y="1516" font-size="20" letter-spacing="1" fill="#5f8a7c" opacity="0.9">Anacostia</text>
<text x="1169" y="1540" font-size="20" letter-spacing="1" fill="#5f8a7c" opacity="0.9">River Stream</text>
<text x="1177" y="1564" font-size="20" letter-spacing="1" fill="#5f8a7c" opacity="0.9">Valley Park</text>
<text x="783" y="1241" font-size="24" letter-spacing="3" fill="#54586c" font-weight="bold" text-anchor="middle">Mt Rainier</text>
<text x="1905" y="1608" font-size="24" letter-spacing="3" fill="#54586c" font-weight="bold" text-anchor="middle">Cheverly</text>
<text x="1987" y="1606" font-size="21" letter-spacing="1" fill="#5a5d72" opacity="0.9">Forest</text>
<text x="2062" y="1600" transform="rotate(-45 2062 1600)" font-size="20" letter-spacing="1.4" fill="#5a5d72" opacity="0.9">Rd</text>
<text x="2082" y="1645" transform="rotate(-62 2082 1645)" font-size="21" letter-spacing="1" fill="#5a5d72" opacity="0.9">son Hwy</text>
<text x="1787" y="1365" transform="rotate(72 1787 1365)" font-size="20" letter-spacing="1" fill="#5a5d72" opacity="0.9">Cheverly Ave</text>
<text x="2053" y="1470" font-size="20" letter-spacing="1" fill="#5d8a78" opacity="0.9">Cheverly</text>
<text x="2079" y="1494" font-size="20" letter-spacing="1" fill="#5d8a78" opacity="0.9">East</text>
<text x="2079" y="1518" font-size="20" letter-spacing="1" fill="#5d8a78" opacity="0.9">Park</text>
<text x="2226" y="1436" transform="rotate(27 2226 1436)" font-size="21" letter-spacing="1" fill="#5a5d72" opacity="0.9">Landover Rd</text>
<text x="2355" y="1298" transform="rotate(-40 2355 1298)" font-size="20" letter-spacing="1" fill="#5a5d72" opacity="0.9">Parkwood</text>
<text x="2212" y="1352" transform="rotate(-62 2212 1352)" font-size="20" letter-spacing="1.4" fill="#5a5d72" opacity="0.85">Wa</text>
<text x="2395" y="996" transform="rotate(72 2395 996)" font-size="20" letter-spacing="1.4" fill="#5a5d72" opacity="0.9">72nd Ave</text>
<text x="2378" y="1052" transform="rotate(72 2378 1052)" font-size="20" letter-spacing="1.4" fill="#5a5d72" opacity="0.9">71st Ave</text>
<text x="2350" y="920" transform="rotate(-20 2350 920)" font-size="21" letter-spacing="1" fill="#5a5d72" opacity="0.9">Annapolis</text>
<text x="1725" y="1010" transform="rotate(-85 1725 1010)" font-size="18" letter-spacing="1.4" fill="#5a5d72" opacity="0.6">51st</text>
<text x="874" y="1316" transform="rotate(-28 874 1316)" font-size="21" letter-spacing="1" fill="#7d785e" opacity="0.85">Bladensburg Rd</text>
<text x="830" y="1395" font-size="20" letter-spacing="1" fill="#8f8b6a" opacity="0.9" text-anchor="middle">Fort</text>
<text x="830" y="1418" font-size="20" letter-spacing="1" fill="#8f8b6a" opacity="0.9" text-anchor="middle">Lincoln</text>
<text x="830" y="1442" font-size="20" letter-spacing="1" fill="#8f8b6a" opacity="0.9" text-anchor="middle">Cemetery</text>
<text x="897" y="1398" transform="rotate(27 897 1398)" font-size="21" letter-spacing="1" fill="#7d785e" opacity="0.85">Oak St</text>
<text x="1077" y="1489" font-size="20" letter-spacing="1" fill="#86a858" opacity="0.9" text-anchor="middle">Colmar</text>
<text x="1077" y="1514" font-size="20" letter-spacing="1" fill="#86a858" opacity="0.9" text-anchor="middle">Manor</text>
<text x="1077" y="1538" font-size="20" letter-spacing="1" fill="#86a858" opacity="0.9" text-anchor="middle">Park</text>
<text x="970" y="1550" transform="rotate(52 970 1550)" font-size="21" letter-spacing="1" fill="#7d785e" opacity="0.85">Riverview Dr</text>
<text x="972" y="1633" transform="rotate(30 972 1633)" font-size="20" letter-spacing="1.4" fill="#7d785e" opacity="0.8">Syl</text>
</g>
<polyline fill="none" stroke="#1fd0e6" stroke-width="3.9" stroke-linejoin="round" points="1752,919 1696,919 1688,950 1667,978 1650,993 1630,993 1613,989 1600,980 1573,957 1552,987 1456,920 1474,893 1430,878 1376,962 1334,1018 1181,940 1125,972 1066,1024 1049,1011 1060,1040 1052,1090 1055,1122 1069,1150 1092,1173 1072,1184 1112,1204 1157,1244 1184,1342 1204,1350 1266,1349 1329,1306 1331,1286 1360,1262 1409,1245 1401,1231 1376,1227 1460,1205 1461,1146 1535,1171 1704,1148 1716,1118 1723,1088 1727,1034 1731,978 1739,954 1752,930"/>
</svg>
<div id="ui">
<div id="header">
<div id="title">Prince George's EJ Screen Mapping</div>
<div id="subtitle">with Web AppBuilder for ArcGIS</div>
</div>

<!-- logo -->
<svg style="position:absolute;left:27px;top:10px;width:60px;height:60px" viewBox="0 0 60 60">
<path d="M30 1 L44 8 L44 22 L56 28 L56 46 L42 54 L30 48 L18 54 L4 46 L4 28 L16 22 L16 8 Z" fill="#fff" stroke="#fff" stroke-width="6" stroke-linejoin="round"/>
<polygon points="30,5 42,11 30,17 18,11" fill="#c6e48b"/><polygon points="18,11 30,17 30,31 18,25" fill="#8cc63f"/><polygon points="42,11 30,17 30,31 42,25" fill="#d7df23"/>
<polygon points="17,25 29,31 17,37 5,31" fill="#7fe0f7"/><polygon points="5,31 17,37 17,51 5,45" fill="#29abe2"/><polygon points="29,31 17,37 17,51 29,45" fill="#4fc8ee"/>
<polygon points="43,25 55,31 43,37 31,31" fill="#ffb199"/><polygon points="31,31 43,37 43,51 31,45" fill="#ff7f66"/><polygon points="55,31 43,37 43,51 55,45" fill="#fbb03b"/>
</svg>
<!-- zoom -->
<div class="mbtn" style="left:16px;top:95px;width:66px;height:130px;"><div style="position:absolute;left:0;top:62px;width:62px;height:2px;background:#525252"></div>
<div style="position:absolute;left:16px;top:27px;width:31px;height:5px;background:#fff"></div><div style="position:absolute;left:29px;top:14px;width:5px;height:31px;background:#fff"></div>
<div style="position:absolute;left:19px;top:90px;width:25px;height:5px;background:#fff"></div></div>
<div class="mbtn" style="left:16px;top:242px;width:66px;height:66px;"><svg style="position:absolute;left:10px;top:11px" width="42" height="42" viewBox="0 0 42 42"><path d="M21 1 L41 21 L35 21 L35 41 L25 41 L25 28 L17 28 L17 41 L7 41 L7 21 L1 21 Z M30 4 L35 4 L35 12 L30 8Z" fill="#f4f4f4"/></svg></div>
<div class="mbtn" style="left:16px;top:316px;width:66px;height:66px;"><svg style="position:absolute;left:9px;top:9px" width="44" height="44" viewBox="0 0 44 44"><circle cx="22" cy="22" r="19" fill="none" stroke="#7d7777" stroke-width="3"/><path d="M22 3v8M22 33v8M3 22h8M33 22h8" stroke="#7d7777" stroke-width="2.5"/></svg></div>
<!-- search -->
<div id="search"><div class="ph">Find address or place</div><div class="sep"></div>
<svg style="position:absolute;left:520px;top:17px" width="38" height="38" viewBox="0 0 38 38"><circle cx="14" cy="14" r="9" fill="none" stroke="#3a3a3a" stroke-width="3"/><path d="M21 21 L32 32" stroke="#3a3a3a" stroke-width="4.4" stroke-linecap="round"/></svg></div>
<!-- toolbar -->
<div class="wbtn" style="left:117px;background:#3f3f3f;border-color:#777"></div>
<div class="wbtn" style="left:222px"></div>
<div class="wbtn" style="left:327px"></div>
<div class="wbtn" style="left:432px"></div>
<div class="wbtn" style="left:537px"></div>

<!-- toolbar icons -->
<svg style="position:absolute;left:117px;top:179px" width="82" height="82" viewBox="0 0 82 82"><g fill="#1f1f1f" transform="translate(41 42) scale(0.8) translate(-40 -43)"><path d="M30 33 q-2 -5 3 -7 q1 -4 6 -3 q2 -4 7 -2 q4 -3 7 0 q3 2 0 5 q-3 3 -7 2 q-3 3 -7 2 q-3 2 -5 2 q-2 2 -4 1z"/><path d="M33 34h3v13h-3zM38 34h3v13h-3zM43 34h3v13h-3z"/><path d="M31 47h17v4h-17z"/><path d="M28 52h22v9h-22z"/></g><path d="M40 55h8" stroke="#3f3f3f" stroke-width="1.5"/></svg>
<svg style="position:absolute;left:222px;top:179px" width="82" height="82" viewBox="0 0 82 82"><defs><mask id="bh" maskUnits="userSpaceOnUse" x="-30" y="-30" width="60" height="60"><rect x="-30" y="-30" width="60" height="60" fill="#000"/><g fill="#fff"><circle cx="0.00" cy="-11.00" r="15"/><circle cx="-9.53" cy="5.50" r="15"/><circle cx="9.53" cy="5.50" r="15"/></g><g fill="#000"><circle cx="0.00" cy="-15.50" r="10.8"/><circle cx="-13.42" cy="7.75" r="10.8"/><circle cx="13.42" cy="7.75" r="10.8"/><circle cx="0" cy="0" r="3.6"/></g><line x1="0" y1="0" x2="0.00" y2="-30.00" stroke="#000" stroke-width="2.2"/><line x1="0" y1="0" x2="-25.98" y2="15.00" stroke="#000" stroke-width="2.2"/><line x1="0" y1="0" x2="25.98" y2="15.00" stroke="#000" stroke-width="2.2"/></mask></defs><g transform="translate(41 45.5) scale(0.86)"><circle cx="0" cy="0" r="9.5" fill="none" stroke="#3d3d3d" stroke-width="2.6"/><rect x="-30" y="-30" width="60" height="60" fill="#f0521f" mask="url(#bh)"/></g></svg>
<svg style="position:absolute;left:327px;top:179px" width="82" height="82" viewBox="0 0 82 82"><g fill="none" stroke="#1b5aa6" stroke-width="2.4" stroke-linejoin="round" stroke-linecap="round"><path d="M41 30 C36 21 22 23 21 35 C21 41 24 45 28 49 L38 59 C40 61 42 61 44 59 L55 48 C60 43 62 39 61 34 C60 23 46 21 41 30Z"/><path d="M29 40 L38 33 L45 36 L55 46"/><path d="M34 37 L42 31 L50 31 L59 38"/><path d="M47 40 L53 47 M43 43 L49 51 M38 46 L45 55 M33 48 L40 56 M28 44 L33 50"/></g></svg>
<svg style="position:absolute;left:432px;top:179px" width="82" height="82" viewBox="0 0 82 82"><g fill="#1a1a1a"><circle cx="30" cy="28" r="3.3"/><path d="M26 33h8l3 12h-2.500l-1 15h-2.500v-13h-1v13h-2.500l-1-15h-2.500z"/><circle cx="41" cy="25.500" r="3.600"/><path d="M36 30.500h10l2.500 14h-3v16h-3.200v-14h-1.600v14h-3.200v-16h-3z"/><circle cx="52.500" cy="28.500" r="3.400"/><path d="M48.500 33.500h8l5 15h-4.500v12h-3v-12h-1.500v12h-3v-12h-4.500z"/><circle cx="35.500" cy="34" r="2.300"/><path d="M33 37.500h5v9h-5z"/><path d="M23 40h4v9h-4z"/></g></svg>
<svg style="position:absolute;left:537px;top:179px" width="82" height="82" viewBox="0 0 82 82"><circle cx="41" cy="41" r="15.500" fill="none" stroke="#151515" stroke-width="2.400"/><rect x="39.800" y="38" width="2.400" height="11.500" fill="#151515"/><circle cx="41" cy="33.500" r="1.800" fill="#151515"/></svg>
<!-- panel -->
<div id="panel">
<div class="hd"><div class="t">Exposure</div>
<svg style="position:absolute;left:789px;top:28px" width="20" height="20" viewBox="0 0 20 20"><path d="M2 2L18 18M18 2L2 18" stroke="#fff" stroke-width="3.6"/></svg></div>
<div class="layers">Layers</div>
<svg style="position:absolute;left:706px;top:101px" width="40" height="40" viewBox="0 0 40 40"><circle cx="15" cy="15" r="11" fill="none" stroke="#8e8e8e" stroke-width="3.6"/><path d="M23 23L33 33" stroke="#8e8e8e" stroke-width="5" stroke-linecap="round"/></svg>
<svg style="position:absolute;left:757px;top:101px" width="40" height="40" viewBox="0 0 40 40"><path d="M2 4h34M2 13h34M2 22h12" stroke="#8e8e8e" stroke-width="2.6" fill="none"/><path d="M17 26l6 6l13-13" stroke="#8e8e8e" stroke-width="3" fill="none"/><rect x="2" y="30" width="9" height="3.4" fill="#8e8e8e"/></svg>
<div style="position:absolute;left:30px;top:249px;width:765px;height:84px;background:#d8e0e4"></div>
<div class="row" style="top:165px"><div class="arr"></div><div class="cb"></div><div class="txt">1) Pollution Burden: Exposure</div><div class="dots" style="left:754px;top:48px"><i></i><i></i><i></i></div></div>
<div class="row" style="top:249px"><div class="arr" style="left:40px;top:36px;border-left:9px solid transparent;border-right:9px solid transparent;border-top:10px solid #999;border-bottom:0"></div><div class="cb" style="background:#17b9d4;border-color:#17b9d4"><svg style="position:absolute;left:3px;top:5px" width="24" height="20" viewBox="0 0 24 20"><path d="M3 9l6 6l12-11" stroke="#fff" stroke-width="3.6" fill="none"/></svg></div><div class="txt">--a) NATA Air Toxics Cancer Risk</div><div class="dots" style="left:754px;top:48px"><i></i><i></i><i></i></div></div>
<div class="legt" style="left:60px;top:344px;font-size:25px">NATA Air Toxics Cancer Risks</div>
<svg class="leg" style="top:389px" viewBox="0 0 43 43"><polygon points="0,0 43,24 43,43 0,43" fill="#8d8ca4"/></svg><div class="legt" style="top:395px">&gt; 0.9 to 1</div>
<svg class="leg" style="top:452px" viewBox="0 0 43 43"><polygon points="0,0 43,24 43,43 0,43" fill="#8faacf"/></svg><div class="legt" style="top:458px">&gt; 0.75 to 0.9</div>
<svg class="leg" style="top:515px" viewBox="0 0 43 43"><polygon points="0,0 43,24 43,43 0,43" fill="#e3d8a3"/></svg><div class="legt" style="top:521px">&gt; 0.5 to 0.75</div>
<svg class="leg" style="top:578px" viewBox="0 0 43 43"><polygon points="0,0 43,24 43,43 0,43" fill="#fdf2c4"/></svg><div class="legt" style="top:584px">0 to 0.5</div>
<div class="row" style="top:631px"><div class="arr"></div><div class="cb"></div><div class="txt">--b) NATA Respiratory Hazard Index</div><div class="dots" style="left:754px;top:48px"><i></i><i></i><i></i></div></div>
<div class="row" style="top:715px"><div class="arr"></div><div class="cb"></div><div class="txt">--c) NATA Diesel Particulate Matter</div><div class="dots" style="left:754px;top:48px"><i></i><i></i><i></i></div></div>
<div class="row" style="top:799px"><div class="arr"></div><div class="cb"></div><div class="txt">--d) Particulate Matter 2.5 (PM2.5)</div><div class="dots" style="left:754px;top:48px"><i></i><i></i><i></i></div></div>
<div style="position:absolute;left:823px;top:73px;width:15px;height:786px;background:#f2f2f2"></div>
<svg style="position:absolute;left:812px;top:836px" width="24" height="22" viewBox="0 0 24 22"><g fill="#333"><rect x="17" y="15" width="5" height="5"/></g><g fill="#777"><rect x="10" y="15" width="5" height="5"/><rect x="17" y="8" width="5" height="5"/></g><g fill="#bbb"><rect x="3" y="15" width="5" height="5"/><rect x="10" y="8" width="5" height="5"/><rect x="17" y="1" width="5" height="5"/></g></svg>
<div style="position:absolute;left:823px;top:73px;width:14px;height:609px;background:#a3a3a3;border-radius:0 0 6px 6px"></div>
</div>
<!-- popup -->
<div style="position:absolute;left:1705px;top:896px;width:0;height:0;border-right:26px solid #fff;border-top:26px solid transparent;border-bottom:26px solid transparent"></div>
<div id="popup"><div class="hd">
<svg style="position:absolute;left:497px;top:11px" width="26" height="22" viewBox="0 0 26 22"><rect x="1.5" y="1.5" width="23" height="19" fill="none" stroke="#fff" stroke-width="3"/><rect x="1" y="1" width="24" height="6" fill="#fff"/></svg>
<svg style="position:absolute;left:536px;top:11px" width="22" height="22" viewBox="0 0 22 22"><path d="M2 2L20 20M20 2L2 20" stroke="#fff" stroke-width="3.4"/></svg></div>
<div class="pl" style="top:69px">Census Tract</div><div class="pv" style="top:69px">24033804002</div>
<div class="pl" style="top:113px;letter-spacing:-0.5px">MARYLAND EJ SCORE</div><div class="pv" style="top:113px">0.88</div>
<div class="pl" style="top:157px">NATA Air Toxics Cancer Risks</div><div class="pv" style="top:157px">0.91</div>
<div class="pl" style="top:201px">NATA Respiratory Hazard<br>Index</div><div class="pv" style="top:201px">0.85</div>
<div class="pl" style="top:274px">NATA Diesel Particulate<br>Matter (DPM)</div><div class="pv" style="top:274px">0.90</div>
<div class="pl" style="top:347px">Particulate Matter (PM2.5)</div><div class="pv" style="top:347px">0.33</div>
<div class="pl" style="top:391px">Ozone</div><div class="pv" style="top:391px">0.75</div>
<div class="pl" style="top:435px">Traffic Proximity and Volume</div><div class="pv" style="top:435px">0.80</div>
<div class="pl" style="top:479px">Lead Paint Indicator</div><div class="pv" style="top:479px">0.76</div>
<div class="pl" style="top:523px">Proximity to Risk<br>Management Plan Sites</div><div class="pv" style="top:523px">0.86</div>
<div class="pl" style="top:596px">Proximity to Treatment<br>Storage and Disposal<br>Facilities</div><div class="pv" style="top:596px">0.83</div>
<div style="position:absolute;left:555px;top:41px;width:13px;height:664px;background:#efefef"></div>
<div style="position:absolute;left:555px;top:41px;width:13px;height:251px;background:#a3a3a3;border-radius:0 0 6px 6px"></div>
<div style="position:absolute;left:22px;top:709px;font-size:25px;line-height:30px;color:#1f6fae;text-decoration:underline;letter-spacing:0.9px">Zoom to</div>
<div class="dots" style="left:491px;top:722px"><i></i><i></i><i></i></div>
</div>
</div>
</div>
</body>
</html>
